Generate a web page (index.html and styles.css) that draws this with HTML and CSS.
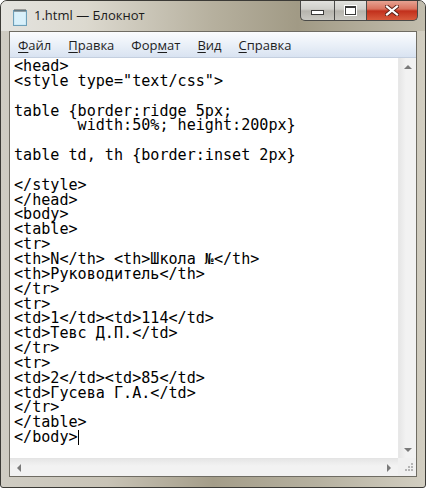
FILE: index.html
```html
<!DOCTYPE html>
<html lang="ru">
  <head>
    <meta charset="UTF-8" />
    <title>1.html — Блокнот</title>
    <link rel="stylesheet" href="styles.css">
  </head>
  <body>
    <div class="window">
      <div class="titlebar">
        <svg class="app-icon" width="16" height="18" viewBox="0 0 16 18">
          <rect x="1.5" y="2.5" width="13" height="15" fill="#bfe3f2" stroke="#6e9fb8" />
          <rect x="2.5" y="3.5" width="11" height="13" fill="#d9f0fa" />
          <path d="M3 1v3M5 1v3M7 1v3M9 1v3M11 1v3M13 1v3" stroke="#555" stroke-width="1" />
        </svg>
        <span class="title">1.html — Блокнот</span>
        <div class="caption-buttons">
          <div class="cap-btn minimize"><span class="min-glyph"></span></div>
          <div class="cap-btn maximize"><span class="max-glyph"></span></div>
          <div class="cap-btn close">
            <svg width="14" height="11" viewBox="0 0 14 11">
              <path d="M2 1.5L12 9.5M12 1.5L2 9.5" stroke="#5a2218" stroke-width="4" stroke-linecap="square" />
              <path d="M2 1.5L12 9.5M12 1.5L2 9.5" stroke="#fff" stroke-width="2.2" stroke-linecap="square" />
            </svg>
          </div>
        </div>
      </div>
      <div class="client">
        <div class="menubar">
          <span class="menu-item"><u>Ф</u>айл</span>
          <span class="menu-item"><u>П</u>равка</span>
          <span class="menu-item">Фор<u>м</u>ат</span>
          <span class="menu-item"><u>В</u>ид</span>
          <span class="menu-item"><u>С</u>правка</span>
        </div>
        <div class="editor">
          <pre class="text">&lt;head&gt;
&lt;style type="text/css"&gt;

table {border:ridge 5px;
       width:50%; height:200px}

table td, th {border:inset 2px}

&lt;/style&gt;
&lt;/head&gt;
&lt;body&gt;
&lt;table&gt;
&lt;tr&gt;
&lt;th&gt;N&lt;/th&gt; &lt;th&gt;Школа №&lt;/th&gt;
&lt;th&gt;Руководитель&lt;/th&gt;
&lt;/tr&gt;
&lt;tr&gt;
&lt;td&gt;1&lt;/td&gt;&lt;td&gt;114&lt;/td&gt;
&lt;td&gt;Тевс Д.П.&lt;/td&gt;
&lt;/tr&gt;
&lt;tr&gt;
&lt;td&gt;2&lt;/td&gt;&lt;td&gt;85&lt;/td&gt;
&lt;td&gt;Гусева Г.А.&lt;/td&gt;
&lt;/tr&gt;
&lt;/table&gt;
&lt;/body&gt;<span class="caret"></span></pre>
          <div class="vscroll">
            <span class="arrow up"></span>
            <span class="arrow down"></span>
          </div>
        </div>
        <div class="bottom-row">
          <div class="hscroll">
            <span class="arrow left"></span>
            <span class="arrow right"></span>
          </div>
          <div class="grip">
            <svg width="12" height="12" viewBox="0 0 12 12">
              <g fill="#b5b5b5">
                <rect x="9" y="1" width="2" height="2" />
                <rect x="6" y="4" width="2" height="2" />
                <rect x="9" y="4" width="2" height="2" />
                <rect x="3" y="7" width="2" height="2" />
                <rect x="6" y="7" width="2" height="2" />
                <rect x="9" y="7" width="2" height="2" />
              </g>
            </svg>
          </div>
        </div>
      </div>
    </div>
  </body>
</html>
```

FILE: styles.css
```css
body {
    margin: 0;
    padding: 0;
    background-color: #fff;
    font-family: "Open Sans", "Liberation Sans", sans-serif;
}
.window {
    width: 426px;
    height: 488px;
    box-sizing: border-box;
    border: 1px solid #3b3a36;
    border-radius: 7px 7px 3px 3px;
    background: linear-gradient(90deg, #cfccc3 0%, #c8c3b6 25%, #a49d89 50%, #b6b1a0 75%, #d2cec1 100%);
    display: flex;
    flex-direction: column;
    overflow: hidden;
}
.titlebar {
    height: 30px;
    display: flex;
    align-items: flex-start;
    padding-left: 11px;
    background: linear-gradient(90deg, #e4e3df 0%, #dcd9cf 20%, #b6b09e 50%, #a19a85 70%, #c2bdad 100%);
}
.app-icon {
    margin-top: 7px;
}
.title {
    margin-left: 6px;
    margin-top: 5px;
    font-size: 13px;
    color: #1b1b1b;
}
.caption-buttons {
    margin-left: auto;
    margin-right: 7px;
    display: flex;
    height: 21px;
    margin-top: -1px;
}
.cap-btn {
    height: 21px;
    box-sizing: border-box;
    border: 1px solid #4a4a48;
    border-top: none;
    display: flex;
    align-items: center;
    justify-content: center;
    background: linear-gradient(180deg, #e3e3e0 0%, #cfcfca 45%, #b6b4ad 55%, #c9c8c2 100%);
}
.minimize {
    width: 34px;
    border-radius: 0 0 0 5px;
    border-right: none;
}
.maximize {
    width: 32px;
    border-right: none;
}
.close {
    width: 52px;
    border-radius: 0 0 5px 0;
    background: linear-gradient(180deg, #e8a898 0%, #d9735e 45%, #c2301c 55%, #d85a3c 100%);
}
.min-glyph {
    width: 11px;
    height: 3px;
    margin-top: 5px;
    background: #fff;
    border: 1px solid #3a3a3a;
}
.max-glyph {
    width: 9px;
    height: 6px;
    border: 1px solid #3a3a3a;
    border-top-width: 2px;
    background: #fff;
    outline: 1px solid #fff;
}
.client {
    flex: 1;
    margin: 0 8px 10px 8px;
    border: 1px solid #6f6c63;
    background: #fff;
    display: flex;
    flex-direction: column;
    min-height: 0;
}
.menubar {
    height: 25px;
    display: flex;
    align-items: center;
    padding-left: 8px;
    font-size: 13px;
    color: #1e1e1e;
    background: linear-gradient(180deg, #fbfcfe 0%, #eaf0f8 50%, #d9e3f1 100%);
    border-bottom: 1px solid #c4cfdf;
}
.menu-item {
    margin-right: 17px;
}
.menu-item u {
    text-decoration-thickness: 1px;
    text-underline-offset: 2px;
}
.editor {
    flex: 1;
    display: flex;
    min-height: 0;
}
.text {
    flex: 1;
    margin: 0;
    padding: 1px 0 0 4px;
    font-family: "DejaVu Sans Mono", "Liberation Mono", monospace;
    font-size: 15.1px;
    line-height: 14.85px;
    color: #000;
    overflow: hidden;
}
.caret {
    display: inline-block;
    width: 1px;
    height: 15px;
    background: #000;
    vertical-align: -3px;
}
.vscroll {
    width: 17px;
    background: linear-gradient(90deg, #e6e6e6 0%, #f2f2f2 40%, #f2f2f2 100%);
    border-left: 1px solid #e8e8e8;
    display: flex;
    flex-direction: column;
    justify-content: space-between;
    align-items: center;
    padding: 7px 0 6px 0;
}
.bottom-row {
    height: 18px;
    display: flex;
}
.hscroll {
    flex: 1;
    background: linear-gradient(180deg, #e6e6e6 0%, #f2f2f2 40%, #f2f2f2 100%);
    border-top: 1px solid #e4e4e4;
    display: flex;
    align-items: center;
    justify-content: space-between;
    padding: 0 7px;
}
.grip {
    width: 18px;
    background: #f0f0f0;
    display: flex;
    align-items: flex-end;
    justify-content: flex-end;
    padding: 0 2px 2px 0;
    box-sizing: border-box;
}
.arrow {
    width: 0;
    height: 0;
    border: 4px solid transparent;
}
.arrow.up {
    border-bottom: 4px solid #7a7a7a;
    border-top: none;
}
.arrow.down {
    border-top: 4px solid #7a7a7a;
    border-bottom: none;
}
.arrow.left {
    border-right: 4px solid #7a7a7a;
    border-left: none;
}
.arrow.right {
    border-left: 4px solid #7a7a7a;
    border-right: none;
}
```
